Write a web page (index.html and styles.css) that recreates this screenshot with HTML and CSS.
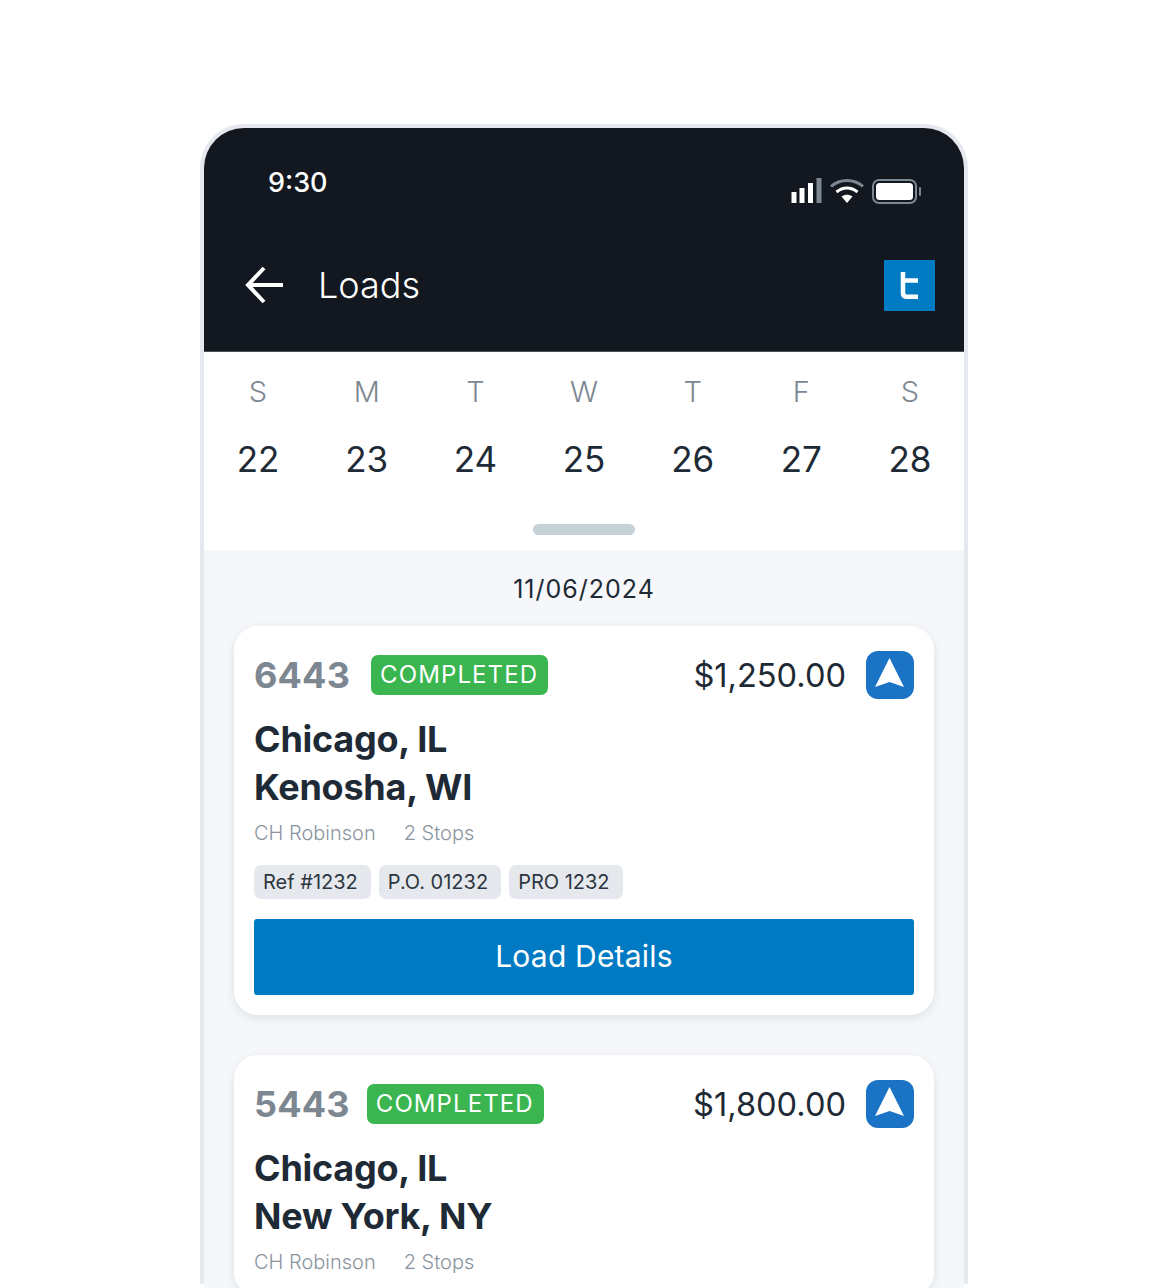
FILE: index.html
```html
<!DOCTYPE html>
<html lang="en">
	<head>
		<meta charset="UTF-8" />
		<meta name="viewport" content="width=device-width, initial-scale=1.0" />
		<title>Loads</title>
		<link rel="stylesheet" href="styles.css">
	</head>
	<body>
		<div class="phone">
			<div class="screen">
				<header class="topbar">
					<div class="status">
						<span class="clock">9:30</span>
						<div class="status-icons">
							<svg width="32" height="26" viewBox="0 0 32 26">
								<rect x="0.500" y="14" width="5" height="11" fill="#fff" />
								<rect x="8.500" y="10" width="5" height="15" fill="#fff" />
								<rect x="17" y="5" width="5" height="20" fill="#fff" />
								<rect x="25.500" y="0" width="5" height="25" fill="#7d8791" />
							</svg>
							<svg width="37" height="26" viewBox="0 0 37 26">
								<path d="M2 8.500C11 0.500 25 0.500 34 8.500" fill="none" stroke="#7d8791" stroke-width="3" />
								<path d="M7.500 14C14 8.500 22 8.500 28.500 14" fill="none" stroke="#fff" stroke-width="3" />
								<path d="M12.500 18.500C16 16 20 16 23.500 18.500L18 25Z" fill="#fff" />
							</svg>
							<svg width="50" height="26" viewBox="0 0 50 26">
								<rect x="1" y="2" width="43" height="23" rx="6" fill="none" stroke="#7d8791" stroke-width="2" />
								<rect x="4" y="5" width="37" height="17" rx="3.500" fill="#fff" />
								<rect x="47" y="9" width="2" height="9" rx="1" fill="#7d8791" />
							</svg>
						</div>
					</div>
					<div class="titlebar">
						<svg class="back" width="40" height="40" viewBox="0 0 40 40">
							<path d="M39 20H4M20 3L4 20L20 37" fill="none" stroke="#fff" stroke-width="4" />
						</svg>
						<h1>Loads</h1>
						<svg class="logo" width="51" height="51" viewBox="0 0 51 51">
							<rect width="51" height="51" fill="#007ac3" />
							<path d="M19 12V33Q19 36.800 23 36.800H34M19 20.500H34" fill="none" stroke="#fff" stroke-width="4.500" />
						</svg>
					</div>
				</header>

				<section class="calendar">
					<div class="week">
						<div class="day"><span class="dow">S</span><span class="num">22</span></div>
						<div class="day"><span class="dow">M</span><span class="num">23</span></div>
						<div class="day"><span class="dow">T</span><span class="num">24</span></div>
						<div class="day"><span class="dow">W</span><span class="num">25</span></div>
						<div class="day"><span class="dow">T</span><span class="num">26</span></div>
						<div class="day"><span class="dow">F</span><span class="num">27</span></div>
						<div class="day"><span class="dow">S</span><span class="num">28</span></div>
					</div>
					<div class="handle"></div>
				</section>

				<main class="list">
					<div class="list-date">11/06/2024</div>

					<article class="card">
						<div class="card-top">
							<span class="load-id">6443</span>
							<span class="status-pill">COMPLETED</span>
							<span class="price">$1,250.00</span>
							<svg class="nav" width="48" height="48" viewBox="0 0 48 48">
								<rect width="48" height="48" rx="12" fill="#1a73c4" />
								<path d="M23.500 7L38 36L23.500 31L9 36Z" fill="#fff" />
							</svg>
						</div>
						<h2 class="route">Chicago, IL<br />Kenosha, WI</h2>
						<div class="meta"><span>CH Robinson</span><span>2 Stops</span></div>
						<div class="tags">
							<span class="tag">Ref #1232</span>
							<span class="tag">P.O. 01232</span>
							<span class="tag">PRO 1232</span>
						</div>
						<button class="details">Load Details</button>
					</article>

					<article class="card">
						<div class="card-top">
							<span class="load-id">5443</span>
							<span class="status-pill tight">COMPLETED</span>
							<span class="price">$1,800.00</span>
							<svg class="nav" width="48" height="48" viewBox="0 0 48 48">
								<rect width="48" height="48" rx="12" fill="#1a73c4" />
								<path d="M23.500 7L38 36L23.500 31L9 36Z" fill="#fff" />
							</svg>
						</div>
						<h2 class="route">Chicago, IL<br />New York, NY</h2>
						<div class="meta"><span>CH Robinson</span><span>2 Stops</span></div>
					</article>
				</main>
			</div>
		</div>
	</body>
</html>
```

FILE: styles.css
```css
html,
body {
	margin: 0;
	padding: 0;
	height: 1288px;
	overflow: hidden;
	background-color: white;
	font-family: Inter, "Liberation Sans", sans-serif;
}

.phone {
	box-sizing: border-box;
	width: 768px;
	height: 1160px;
	margin: 124px 0 0 200px;
	border: 4px solid #e5e8ed;
	border-bottom: none;
	border-radius: 44px 44px 0 0;
}
/* screen runs 4px past the frame, the frame stops short of the bottom */
.screen {
	height: 1160px;
	overflow: hidden;
	border-radius: 40px 40px 0 0;
	background-color: #f5f7fa;
}

.topbar {
	height: 224px;
	box-sizing: border-box;
	background-color: #13171f;
	border-bottom: 1px solid #4a4e55;
}
.status {
	display: flex;
	justify-content: space-between;
	align-items: flex-start;
	padding: 37px 42px 0 64px;
	height: 105px;
	box-sizing: border-box;
}
.clock {
	color: white;
	font-size: 27px;
	font-weight: 500;
	line-height: 36px;
}
.status-icons {
	display: flex;
	gap: 6px;
	padding-top: 13px;
}
.titlebar {
	display: flex;
	align-items: center;
	padding: 0 29px 0 40px;
	height: 104px;
}
.titlebar h1 {
	flex: 1;
	margin: 0 0 0 34px;
	color: white;
	font-size: 36px;
	font-weight: 300;
}

.calendar {
	height: 198px;
	background-color: white;
	display: flex;
	flex-direction: column;
	align-items: center;
}
.week {
	display: grid;
	grid-template-columns: repeat(7, 108.670px);
	padding-top: 21px;
}
.day {
	display: flex;
	flex-direction: column;
	align-items: center;
}
.dow {
	color: #7d8791;
	font-size: 29px;
	font-weight: 350;
	line-height: 38px;
}
.num {
	color: #1e2a35;
	font-size: 35px;
	line-height: 42px;
	margin-top: 27px;
}
.handle {
	width: 102px;
	height: 11px;
	margin-top: 44px;
	border-radius: 6px;
	background-color: #c5d2d8;
}

.list {
	padding: 0 30px;
}
.list-date {
	height: 76px;
	line-height: 78px;
	text-align: center;
	color: #1e2a35;
	font-size: 25px;
	letter-spacing: 1px;
}
.card {
	background-color: white;
	border-radius: 24px;
	padding: 24px 20px 20px;
	margin-bottom: 40px;
	box-shadow: 0px 3px 8px rgba(60, 70, 85, 0.12);
}
.card-top {
	display: flex;
	align-items: center;
	height: 50px;
}
.load-id {
	color: #7d8791;
	font-size: 36px;
	font-weight: 700;
	letter-spacing: 0.2px;
}
.status-pill {
	margin-left: 21px;
	padding: 0 10px 0 9px;
	height: 40px;
	line-height: 40px;
	border-radius: 7px;
	background-color: #3ab54f;
	color: white;
	font-size: 24px;
	letter-spacing: 1.100px;
}
.status-pill.tight {
	margin-left: 17px;
}
.price {
	margin-left: auto;
	color: #1e2a35;
	font-size: 32.600px;
}
.nav {
	margin-left: 20px;
}
.route {
	margin: 15px 0 0;
	color: #1e2a35;
	font-size: 36px;
	font-weight: 700;
	line-height: 48px;
	letter-spacing: -0.25px;
}
.meta {
	display: flex;
	gap: 28px;
	margin-top: 8px;
	color: #8a949e;
	font-size: 20px;
	font-weight: 300;
	line-height: 28px;
}
.tags {
	display: flex;
	gap: 8px;
	margin-top: 18px;
}
.tag {
	padding: 0 13px 0 9px;
	height: 34px;
	line-height: 35px;
	border-radius: 7px;
	background-color: #e5e8ed;
	color: #2c3640;
	font-size: 20px;
}
.details {
	display: block;
	width: 100%;
	height: 76px;
	margin-top: 20px;
	padding: 0 0 2px;
	border: none;
	border-radius: 3px;
	background-color: #007ac3;
	color: white;
	font-family: inherit;
	font-size: 30px;
	letter-spacing: 0.2px;
}
```
